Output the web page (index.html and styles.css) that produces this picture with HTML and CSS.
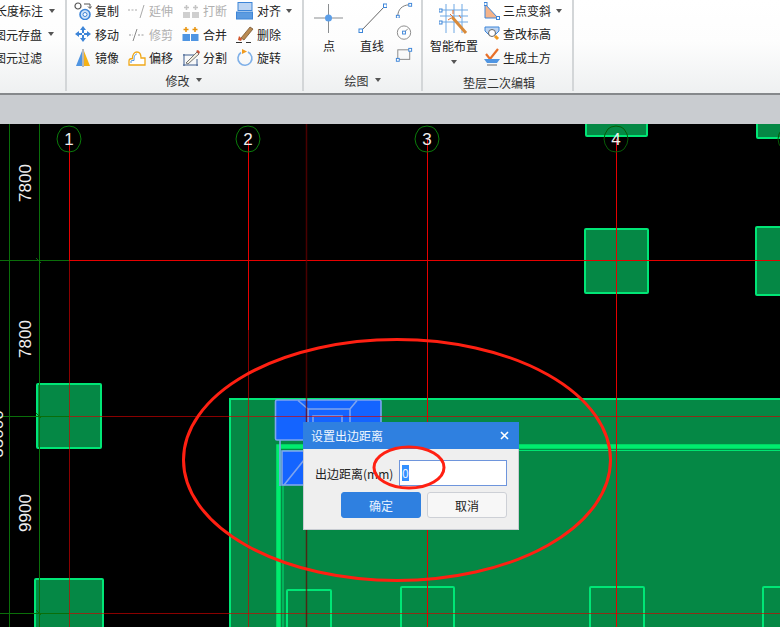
FILE: index.html
```html
<!DOCTYPE html>
<html lang="zh-CN">
<head>
<meta charset="utf-8">
<title>设置出边距离</title>
<link rel="stylesheet" href="styles.css">
</head>
<body>
<div class="app">
  <header class="ribbon">
    <section class="group group-view">
      <div class="list">
        <div class="tool">长度标注<i class="caret"></i></div>
        <div class="tool shift">图元存盘<i class="caret"></i></div>
        <div class="tool shift">图元过滤</div>
      </div>
    </section>

    <section class="group group-modify">
      <div class="tools-grid">
        <div class="tool"><svg class="ico" viewBox="0 0 18 18"><circle cx="4" cy="4" r="3" fill="#fff" stroke="#555" stroke-width="1.2"/><circle cx="11" cy="12.500" r="5" fill="#cfe3f8" stroke="#3d85d8" stroke-width="1.600"/><circle cx="11" cy="12.500" r="2" fill="#fff" stroke="#3d85d8"/><path d="M10 2h6v4M14 4.500l2 2 1.500-2" fill="none" stroke="#555"/></svg>复制</div>
        <div class="tool off"><svg class="ico" viewBox="0 0 18 18"><path d="M0 8h10" stroke="#aaa" stroke-dasharray="2 1.500" fill="none"/><path d="M12 16 16 3" stroke="#aaa" fill="none"/></svg>延伸</div>
        <div class="tool off"><svg class="ico" viewBox="0 0 18 18"><rect x="1" y="10" width="7" height="6" fill="#cfcfcf"/><rect x="10" y="10" width="7" height="6" fill="#cfcfcf"/><path d="M4.500 3v5M2 5.500h5M13.500 3v5M11 5.500h5" stroke="#c4c4c4" stroke-width="1.500"/></svg>打断</div>
        <div class="tool"><svg class="ico" viewBox="0 0 18 18"><rect x="2" y="0.500" width="14" height="8" fill="#bcd4f2" stroke="#3d85d8"/><rect x="0.500" y="10" width="16" height="7" fill="#5c9be0" stroke="#3d85d8"/></svg>对齐<i class="caret"></i></div>

        <div class="tool"><svg class="ico" viewBox="0 0 18 18"><path d="M9 1 12 5H10V8H8V5H6ZM9 17 6 13H8V10H10V13H12ZM1 9 5 6V8H8V10H5V12ZM17 9 13 12V10H10V8H13V6Z" fill="#3d85d8"/></svg>移动</div>
        <div class="tool off"><svg class="ico" viewBox="0 0 18 18"><path d="M1 10h4M10 10h7" stroke="#999" stroke-dasharray="2 1.500" fill="none"/><path d="M5 16 9 4" stroke="#888" fill="none"/></svg>修剪</div>
        <div class="tool"><svg class="ico" viewBox="0 0 18 18"><rect x="0.500" y="9" width="16" height="7" fill="#4f95e2"/><path d="M8.500 9v7" stroke="#fff"/><path d="M4 2v5M1.500 4.500h5M13 2v5M10.500 4.500h5" stroke="#e8930c" stroke-width="1.500"/></svg>合并</div>
        <div class="tool"><svg class="ico" viewBox="0 0 18 18"><path d="M5 13 14 2l3 2-9 11z" fill="#b98a52" stroke="#6b4a26" stroke-width=".7"/><path d="M3 11l3 3-1 2-3-1z" fill="#d2552b"/><path d="M0 17.500h6M10 17.500h5" stroke="#333"/></svg>删除</div>

        <div class="tool"><svg class="ico" viewBox="0 0 18 18"><path d="M8 2 8 17H2z" fill="#4f95e2"/><path d="M10 2 10 17H16z" fill="#f5b216"/><path d="M9 0v18" stroke="#777"/></svg>镜像</div>
        <div class="tool"><svg class="ico" viewBox="0 0 18 18"><path d="M1 16V12C1 10 3 9.500 4.500 9.500C4.500 5 6.500 3 9 3C11.500 3 13 5 13 9H17V16Z" fill="#fff" stroke="#f0a818" stroke-width="1.300"/><path d="M3 14V12C3 11.500 4.500 11.500 6 11.500C6 7 7 5 9 5" fill="none" stroke="#4f95e2"/></svg>偏移</div>
        <div class="tool"><svg class="ico" viewBox="0 0 18 18"><path d="M1 6H12M1 16H16M2 5V17M15 10V17" stroke="#3f5f90" fill="none"/><path d="M4 14 15 3l2 2L6 15z" fill="#f5f0e0" stroke="#555" stroke-width=".8"/><path d="M14 2l2-1 2 2-1 2z" fill="#c8553a"/></svg>分割</div>
        <div class="tool"><svg class="ico" viewBox="0 0 18 18"><path d="M5 3.500A7 7 0 1 0 12 3" fill="none" stroke="#7fb0e8" stroke-width="1.600"/><path d="M6 0l5 2.500L6 5z" fill="#f09a1e"/></svg>旋转</div>
      </div>
      <div class="label label-modify">修改<i class="caret"></i></div>
    </section>

    <section class="group group-draw">
      <div class="draw-row">
        <div class="big"><svg class="big-ico" viewBox="0 0 30 36"><path d="M0 18H29M14.500 4V33" stroke="#8a8d90"/><circle cx="14.500" cy="18" r="3.500" fill="#5b9ee8"/></svg><span>点</span></div>
        <div class="big"><svg class="big-ico" viewBox="0 0 30 36"><path d="M4 31 28 6" stroke="#666"/><rect x="2" y="29" width="3.500" height="3.500" fill="#fff" stroke="#3d85d8"/><rect x="26.500" y="4" width="3.500" height="3.500" fill="#fff" stroke="#3d85d8"/></svg><span>直线</span></div>
        <div class="mini">
          <svg class="mini-ico" viewBox="0 0 18 18"><path d="M2.500 16C2.500 9 7 4.500 14 4" fill="none" stroke="#777"/><rect x="1" y="15" width="3" height="3" fill="#fff" stroke="#3d85d8"/><rect x="14" y="2.500" width="3" height="3" fill="#fff" stroke="#3d85d8"/></svg>
          <svg class="mini-ico" viewBox="0 0 18 18"><circle cx="9" cy="9" r="7" fill="none" stroke="#888"/><path d="M9 9l4-4" stroke="#888"/><rect x="7.500" y="7.500" width="3" height="3" fill="#fff" stroke="#3d85d8"/></svg>
          <svg class="mini-ico" viewBox="0 0 18 18"><rect x="2.500" y="4" width="12.500" height="10" fill="none" stroke="#888"/><rect x="1" y="13" width="3" height="3" fill="#fff" stroke="#3d85d8"/><rect x="14" y="2.500" width="3" height="3" fill="#fff" stroke="#3d85d8"/></svg>
        </div>
      </div>
      <div class="label">绘图<i class="caret"></i></div>
    </section>

    <section class="group group-cushion">
      <div class="cushion-row">
        <div class="big wide">
          <svg class="big-ico" viewBox="0 0 30 36"><path d="M1 10H29M1 16H29M1 22H29M7 4V33M15 4V33M23 4V33" stroke="#6fa8e4" fill="none"/><path d="M13 17 27 33" stroke="#d88a3a" stroke-width="3"/><path d="M11 14l3 3M14 10v4M9 20l3-2M20 15l2 3" stroke="#e8702a"/><rect x="0" y="9" width="3" height="3" fill="#fff" stroke="#3d85d8"/><rect x="0" y="21" width="3" height="3" fill="#fff" stroke="#3d85d8"/></svg>
          <span>智能布置</span>
          <i class="caret caret-under"></i>
        </div>
        <div class="list">
          <div class="tool"><svg class="ico-s" viewBox="0 0 16 18"><path d="M1 2V16H14Z" fill="#f5b48a" stroke="#3d85d8"/><rect x="0" y="0.500" width="3" height="3" fill="#fff" stroke="#3d85d8"/><rect x="12.500" y="14.500" width="3" height="3" fill="#fff" stroke="#3d85d8"/></svg>三点变斜<i class="caret"></i></div>
          <div class="tool"><svg class="ico-s" viewBox="0 0 16 18"><path d="M1 2H15V6L11 10H5L1 6Z" fill="#bcd4f2" stroke="#3d85d8"/><circle cx="8" cy="8" r="3.500" fill="#fff" stroke="#666"/><path d="M11 11l3 3" stroke="#f09a1e" stroke-width="3"/></svg>查改标高</div>
          <div class="tool"><svg class="ico-s" viewBox="0 0 16 18"><path d="M2 6l4 5L14 1" fill="none" stroke="#e8702a" stroke-width="2.200"/><path d="M0 11H16L13 15H3Z" fill="#4f95e2"/><path d="M3 17H13" stroke="#999" stroke-width="1.500"/></svg>生成土方</div>
        </div>
      </div>
      <div class="label label-low">垫层二次编辑</div>
    </section>
  </header>

  <div class="strip"></div>

  <main class="canvas">
    <svg class="layer" viewBox="0 124 780 503">
      <g class="col">
        <rect x="586" y="116" width="61" height="20"/>
        <rect x="757" y="116" width="40" height="22"/>
        <rect x="585" y="229" width="63" height="64"/>
        <rect x="756" y="227" width="40" height="68"/>
        <rect x="37" y="384" width="64" height="64"/>
        <rect x="35" y="579" width="68" height="60"/>
      </g>
      <rect class="raft" x="230" y="399" width="570" height="240"/>
      <path class="band" d="M278.500 640V446.500H800"/>
      <path class="band-thin" d="M283 640V450.500H800"/>
      <g class="col nofill">
        <rect x="287" y="590" width="44" height="50"/>
        <rect x="401" y="587" width="53" height="50"/>
        <rect x="590" y="587" width="54" height="50"/>
        <rect x="763" y="587" width="40" height="50"/>
      </g>

      <rect class="blue" x="275.500" y="400" width="105.500" height="40" rx="1.500"/>
      <rect class="blue" x="282" y="451" width="28" height="34"/>
      <path class="blue-line" d="M298 400.500 308 409H350L357 400.500M308 409V440M350 409V440M313 440V416H342V440M280 440V486M284 485 304 460"/>

      <g class="axis-green">
        <path d="M9.500 124V627M39.500 124V627"/>
        <path d="M0 260.500H69M0 416.500H69M0 613.500H69"/>
        <path d="M36 258l5 5M36 413l5 5M36 610l5 5"/>
      </g>
      <g class="axis-red">
        <path class="dim" d="M69.500 261V627M248.500 330V627"/>
        <path d="M69.500 139V261M248.500 139V330M427.500 139V627M616.500 139V627"/>
        <path d="M69 260.500H780"/>
        <path class="dim" d="M69 416.500H780M69 613.500H780"/>
      </g>
      <path class="axis-dark" d="M306.500 124V627"/>

      <g class="bubble">
        <polygon points="81,139 80,144 77,149 74,151 69,152 64,151 61,149 58,144 57,139 58,134 61,129 64,127 69,126 74,127 77,129 80,134"/>
        <polygon points="260,139 259,144 256,149 253,151 248,152 243,151 240,149 237,144 236,139 237,134 240,129 243,127 248,126 253,127 256,129 259,134"/>
        <polygon points="439,139 438,144 435,149 432,151 427,152 422,151 419,149 416,144 415,139 416,134 419,129 422,127 427,126 432,127 435,129 438,134"/>
        <polygon class="faint" points="628,139 627,144 624,149 621,151 616,152 611,151 608,149 605,144 604,139 605,134 608,129 611,127 616,126 621,127 624,129 627,134"/>
        <polygon class="faint" points="802,139 801,144 798,149 795,151 790,152 785,151 782,149 779,144 778,139 779,134 782,129 785,127 790,126 795,127 798,129 801,134"/>
      </g>
      <g class="cad-text">
        <text class="num" x="69" y="145">1</text>
        <text class="num" x="248" y="145">2</text>
        <text class="num" x="427" y="145">3</text>
        <text class="num" x="616" y="145">4</text>
        <text class="num" transform="translate(31 183) rotate(-90)">7800</text>
        <text class="num" transform="translate(31 339) rotate(-90)">7800</text>
        <text class="num" transform="translate(31 513) rotate(-90)">9900</text>
        <text class="num" transform="translate(3 434) rotate(-90)">33000</text>
      </g>
    </svg>

    <div class="dialog">
      <div class="dialog-head">
        <span>设置出边距离</span>
        <svg class="close" viewBox="0 0 9 9"><path d="M1 1 8 8M8 1 1 8"/></svg>
      </div>
      <div class="dialog-body">
        <div class="field">
          <span class="field-label">出边距离(mm)</span>
          <div class="input"><span class="sel">0</span></div>
        </div>
        <div class="actions">
          <div class="btn primary">确定</div>
          <div class="btn">取消</div>
        </div>
      </div>
    </div>

    <svg class="layer annot" viewBox="0 124 780 503">
      <ellipse cx="397" cy="460" rx="213.500" ry="120.500"/>
      <ellipse cx="409" cy="467.500" rx="35" ry="20.500"/>
    </svg>
  </main>
</div>
</body>
</html>
```
FILE: styles.css
```css
* { box-sizing: border-box; }

html, body {
  margin: 0;
  height: 627px;
  overflow: hidden;
}

body {
  font-family: "Noto Sans CJK SC", "Liberation Sans", sans-serif;
  font-size: 12px;
  color: #222;
}

.app {
  display: flex;
  flex-direction: column;
  height: 627px;
  width: 780px;
  overflow: hidden;
}

/* ribbon */
.ribbon {
  display: flex;
  height: 95px;
  flex: none;
  background: linear-gradient(#fff 0, #fdfdfd 45%, #eef0f1 100%);
  border-bottom: 2px solid #85888b;
}

.group {
  display: flex;
  flex-direction: column;
  flex: none;
  height: 91px;
  border-right: 2px solid #d3d6d8;
}

.group-view { width: 72px; margin-left: -5px; }
.group-modify { width: 237px; padding-left: 7px; }
.group-draw { width: 119px; }
.group-cushion { width: 151px; }

.list {
  display: flex;
  flex-direction: column;
  margin-top: -1px;
}

.tool {
  display: flex;
  align-items: center;
  height: 23.5px;
  white-space: nowrap;
  line-height: 23px;
}

.tool.off { color: #b0b0b0; }
.tool.shift { margin-left: -1px; }

.tools-grid {
  display: grid;
  grid-template-columns: repeat(4, 54px);
  grid-auto-rows: 23.5px;
  height: 70px;
  margin-top: -1px;
}

.ico {
  width: 18px;
  height: 18px;
  margin-right: 3px;
  flex: none;
}

.ico-s {
  width: 16px;
  height: 18px;
  margin-right: 3px;
  flex: none;
}

.caret {
  display: block;
  width: 0;
  height: 0;
  margin-left: 5px;
  border-left: 3.5px solid transparent;
  border-right: 3.5px solid transparent;
  border-top: 4px solid #555;
}

.group-view .caret { margin-left: 6px; }
.group-modify .tool .caret { margin-left: 5px; }
.group-cushion .tool .caret { margin-left: 5px; }

.label {
  display: flex;
  align-items: center;
  justify-content: center;
  height: 25px;
  color: #333;
}

.label .caret { margin-left: 6px; }
.label-modify { padding-right: 9px; }
.label-low { padding: 4px 0 0 3px; }

.draw-row {
  display: flex;
  height: 69px;
  padding-left: 6px;
}

.big {
  display: flex;
  flex-direction: column;
  align-items: center;
  width: 38px;
  line-height: 18px;
}

.big + .big { margin-left: 4px; width: 40px; }

.big-ico {
  width: 30px;
  height: 36px;
  margin-bottom: 1px;
  flex: none;
}

.mini {
  display: flex;
  flex-direction: column;
  margin-left: 3px;
  padding-top: 1px;
}

.mini-ico {
  width: 18px;
  height: 18px;
  margin-bottom: 5.5px;
}

.cushion-row {
  display: flex;
  height: 69px;
  padding-left: 7px;
  gap: 6px;
}

.big.wide { width: 48px; }
.caret-under { margin: 5px 0 0; }

.strip {
  flex: none;
  height: 29px;
  background: #c9ccd0;
}

/* CAD canvas */
.canvas {
  position: relative;
  flex: 1;
  background: #000;
  overflow: hidden;
}

.layer {
  position: absolute;
  left: 0;
  top: 0;
  width: 780px;
  height: 503px;
}

.col rect {
  fill: #058845;
  stroke: #00e676;
  stroke-width: 2;
  rx: 1px;
}

.col.nofill rect { fill: none; }

.raft {
  fill: #058845;
  stroke: #00e676;
  stroke-width: 2;
}

.band {
  fill: none;
  stroke: #00ec6e;
  stroke-width: 4.5;
}

.band-thin {
  fill: none;
  stroke: #00e472;
  stroke-width: 1;
}

.blue { fill: #1464ff; stroke: #7ea4ee; stroke-width: 1.6; }
.blue-line { fill: none; stroke: #7ea4ee; stroke-width: 1.6; }

.axis-green path { fill: none; stroke: #0a6e0a; stroke-width: 1; }

.axis-red path {
  fill: none;
  stroke: #e60000;
  stroke-width: 1;
}

.axis-red path.dim { stroke: #d40000; opacity: .65; }

.axis-dark { stroke: #6a0000; stroke-width: 1.5; opacity: .7; fill: none; }

.bubble polygon { fill: none; stroke: #0a7a0a; stroke-width: 1; }
.bubble polygon.faint { stroke: #075a07; }

.num {
  font-family: "Liberation Sans", sans-serif;
  font-size: 17px;
  fill: #eee;
  text-anchor: middle;
}

/* dialog */
.dialog {
  position: absolute;
  left: 303px;
  top: 298px;
  width: 216px;
  height: 108px;
  background: #efefef;
  border-right: 1px solid #c8ccd2;
  border-bottom: 1px solid #c8ccd2;
  border-left: 1px solid #c8ccd2;
}

.dialog-head {
  display: flex;
  align-items: center;
  justify-content: space-between;
  height: 27px;
  margin: 0 -1px;
  padding: 0 10px 0 8px;
  background: #2f80e0;
  color: #f0f6ff;
}

.close {
  width: 9px;
  height: 9px;
  stroke: #fff;
  stroke-width: 1.6;
  fill: none;
}

.dialog-body {
  display: flex;
  flex-direction: column;
  gap: 6px;
  padding: 11px 11px 0;
}

.field {
  display: flex;
  align-items: center;
  justify-content: space-between;
  height: 26px;
}

.input {
  display: flex;
  align-items: center;
  width: 108px;
  height: 26px;
  padding-left: 2px;
  background: #fff;
  border: 1px solid #6e95dc;
}

.sel {
  background: #3390ff;
  color: #e8f2ff;
  line-height: 16px;
}

.actions {
  display: flex;
  justify-content: flex-end;
  gap: 6px;
}

.btn {
  display: flex;
  align-items: center;
  justify-content: center;
  width: 80px;
  height: 26px;
  background: #f7f7f7;
  border: 1px solid #cdd0d6;
  border-radius: 3px;
}

.btn.primary {
  background: #2f80e0;
  border-color: #2f80e0;
  color: #e8f2ff;
}

.annot { pointer-events: none; }

.annot ellipse {
  fill: none;
  stroke: #ff2012;
  stroke-width: 3;
}
```
